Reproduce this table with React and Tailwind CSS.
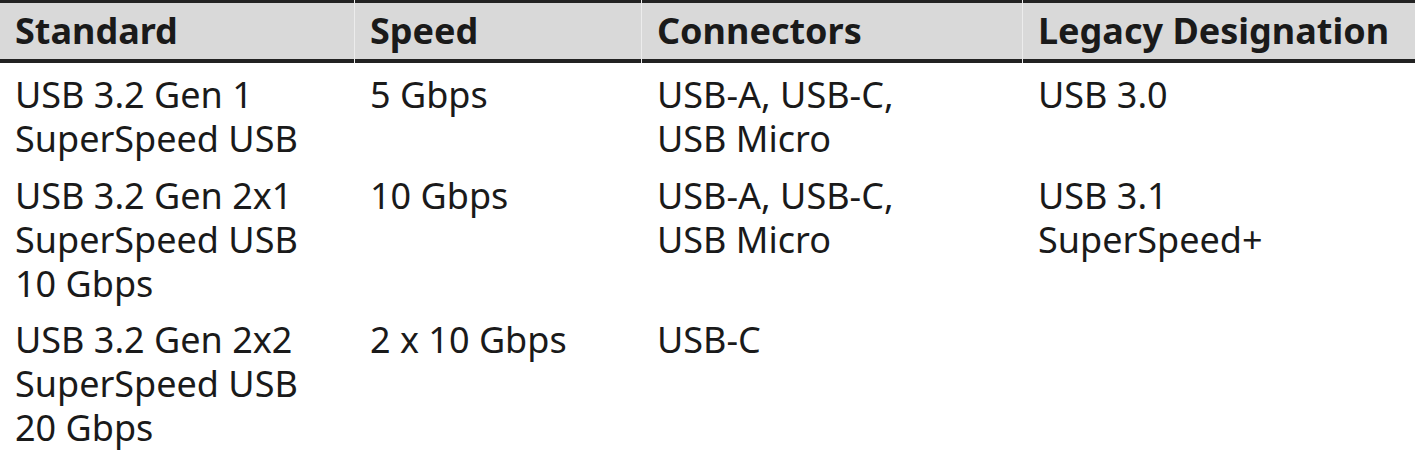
import React from "react";

const rows = [
  {
    standard: ["USB 3.2 Gen 1", "SuperSpeed USB"],
    speed: "5 Gbps",
    connectors: ["USB-A, USB-C,", "USB Micro"],
    legacy: ["USB 3.0"],
    pad: "pt-[10px] pb-[3px]",
  },
  {
    standard: ["USB 3.2 Gen 2x1", "SuperSpeed USB", "10 Gbps"],
    speed: "10 Gbps",
    connectors: ["USB-A, USB-C,", "USB Micro"],
    legacy: ["USB 3.1", "SuperSpeed+"],
    pad: "pt-[10px] pb-[3px]",
  },
  {
    standard: ["USB 3.2 Gen 2x2", "SuperSpeed USB", "20 Gbps"],
    speed: "2 x 10 Gbps",
    connectors: ["USB-C"],
    legacy: [],
    pad: "pt-[9px]",
  },
];

const headers = ["Standard", "Speed", "Connectors", "Legacy Designation"];

const Lines = ({ lines }) => (
  <>
    {lines.map((l, i) => (
      <div key={i}>{l}</div>
    ))}
  </>
);

export default function App() {
  return (
    <div className="bg-white w-[1417px] font-['Noto_Sans','Open_Sans',sans-serif] text-[#1a1a1a]">
      <div className="w-[1415px]">
        {/* Header */}
        <div className="grid grid-cols-[354px_286px_380px_392px] gap-x-px bg-[#ececec]">
          {headers.map((h) => (
            <div
              key={h}
              className="bg-[#d9d9d9] border-t-[3px] border-b-[4px] border-[#222222] h-[63px] pl-[15px] flex items-center text-[36px] font-bold leading-none"
            >
              {h}
            </div>
          ))}
        </div>

        {/* Body */}
        {rows.map((r, i) => (
          <div
            key={i}
            className={`grid grid-cols-[354px_286px_380px_392px] gap-x-px text-[36px] leading-[44px] ${r.pad}`}
          >
            <div className="pl-[15px]">
              <Lines lines={r.standard} />
            </div>
            <div className="pl-[15px]">{r.speed}</div>
            <div className="pl-[15px]">
              <Lines lines={r.connectors} />
            </div>
            <div className="pl-[15px]">
              <Lines lines={r.legacy} />
            </div>
          </div>
        ))}
      </div>
    </div>
  );
}
